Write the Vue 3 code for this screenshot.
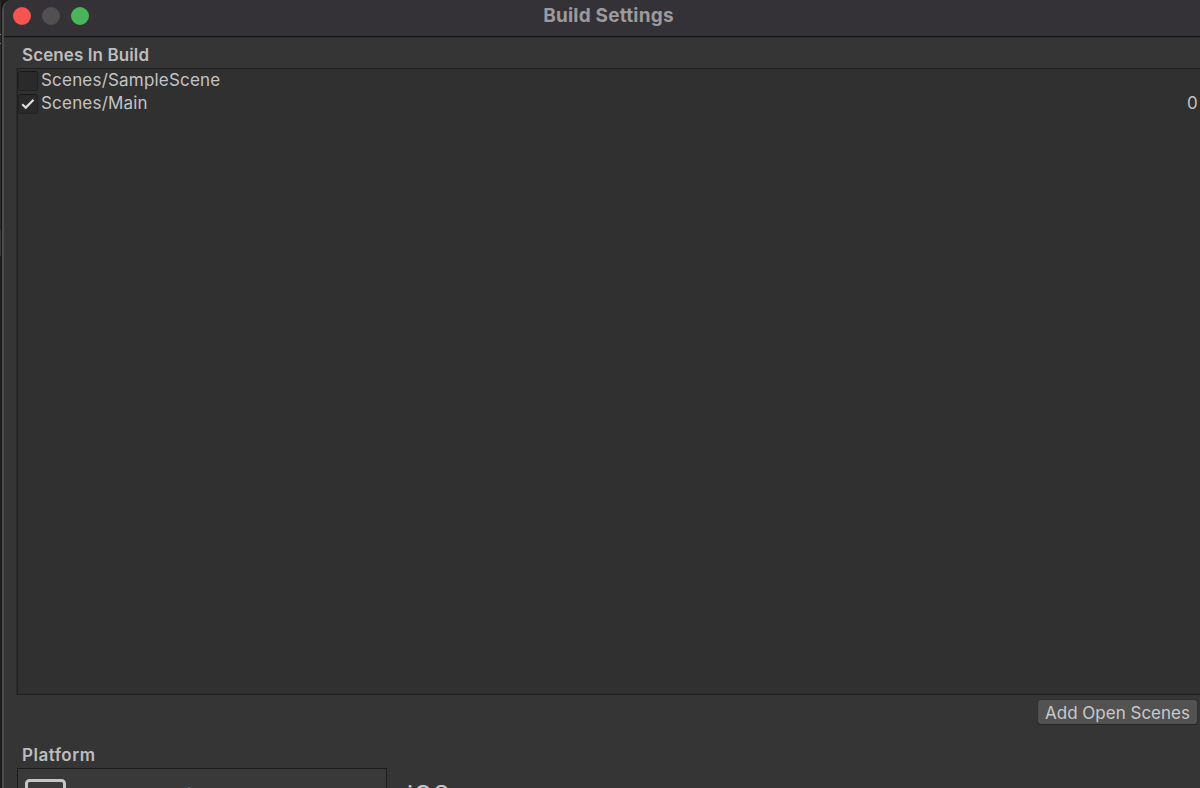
<template>
  <div class="desktop">
    <div class="edge">
      <i class="mark"></i>
    </div>
    <div class="window">
      <header class="titlebar">
        <div class="lights">
          <span class="light close"></span>
          <span class="light minimize"></span>
          <span class="light zoom"></span>
        </div>
        <h1>Build Settings</h1>
      </header>

      <main>
        <h2 class="scenes-title">Scenes In Build</h2>
        <div class="scene-list">
          <div v-for="scene in scenes" :key="scene.name" class="scene" @click="scene.enabled = !scene.enabled">
            <span class="checkbox">
              <svg v-if="scene.enabled" width="14" height="12" viewBox="0 0 14 12">
                <path d="M1.2 6.2 4.8 9.6 12.5 1.8" />
              </svg>
            </span>
            <span class="scene-name">{{ scene.name }}</span>
            <span v-if="scene.enabled" class="index">{{ buildIndex(scene) }}</span>
          </div>
        </div>

        <div class="actions">
          <button type="button">Add Open Scenes</button>
        </div>

        <h2 class="platform-title">Platform</h2>
        <div class="platforms">
          <div class="platform-list">
            <svg class="monitor" width="42" height="36" viewBox="0 0 42 36">
              <rect x="1.5" y="1.5" width="38" height="27" rx="3" />
            </svg>
            <span class="platform-name">PC, Mac &amp; Linux Standalone</span>
          </div>
          <div class="platform-detail">iOS</div>
        </div>
      </main>
    </div>
  </div>
</template>

<script setup>
import { ref } from 'vue';

const scenes = ref([
  { name: 'Scenes/SampleScene', enabled: false },
  { name: 'Scenes/Main', enabled: true }
]);

// Only enabled scenes get an index
const buildIndex = (scene) => scenes.value.filter((s) => s.enabled).indexOf(scene);
</script>

<style>
body {
  margin: 0;
  background: #1c1c1c;
  overflow: hidden;
}
</style>

<style scoped>
.desktop {
  display: flex;
  width: 1200px;
  height: 788px;
  overflow: hidden;
  background: #1b1b1b;
  color: #c4c4c4;
  font-family: Inter, "Liberation Sans", sans-serif;
}

.edge {
  width: 2px;
  flex: none;
  background: linear-gradient(90deg, transparent 50%, #1a1a1a 50%), linear-gradient(#292929 0 230px, #3a3a3a 230px 256px, #1c1c1c 256px);
}

.mark {
  display: block;
  width: 1px;
  height: 10px;
  margin-top: 34px;
  border-top: 1px solid #888;
  border-bottom: 1px solid #777;
  box-sizing: border-box;
}

.window {
  flex: 1;
  min-width: 0;
  box-sizing: border-box;
  border-left: 2px solid #4c4c4c;
  border-top-left-radius: 10px;
  background: #353535;
  overflow: hidden;
}

.titlebar {
  display: grid;
  grid-template-columns: 1fr auto 1fr;
  align-items: center;
  height: 37px;
  padding: 0 0 4px 9px;
  box-sizing: border-box;
  border-bottom: 1px solid #151515;
  background: #343236;
  box-shadow: 0 1px 0 #2a2a2a;
}

.lights {
  display: flex;
  gap: 11px;
}

.light {
  width: 18px;
  height: 18px;
  border-radius: 50%;
}

.close { background: #f6544f; }
.minimize { background: #505050; }
.zoom { background: #48b558; }

h1 {
  margin: 0 0 1px 4px;
  font-size: 19px;
  line-height: 22px;
  font-weight: 700;
  letter-spacing: 0.2px;
  color: #9b9a9c;
}

main {
  padding-left: 13px;
}

h2 {
  margin: 0;
  padding-left: 5px;
  font-size: 17px;
  line-height: 22px;
  font-weight: 600;
  color: #bdbdbd;
}

.scenes-title {
  padding-top: 7px;
  height: 24px;
  letter-spacing: 0.1px;
}

.scene-list {
  height: 627px;
  box-sizing: border-box;
  border: 1px solid #1f1f1f;
  border-width: 1px 0 1px 1px;
  background: #303030;
  box-shadow: -1px 0 0 #2b2b2b;
}

.scene {
  display: flex;
  align-items: center;
  height: 23px;
  padding-right: 2px;
  font-size: 17px;
  line-height: 22px;
  letter-spacing: 0.2px;
}

.scene-name,
.index {
  padding-bottom: 1px;
}

.checkbox {
  display: flex;
  align-items: center;
  justify-content: center;
  width: 20px;
  height: 20px;
  margin-right: 3px;
  box-sizing: border-box;
  border: 1px solid #222;
  border-top-color: #181818;
  border-radius: 3px;
  background: #2a2a2a;
}

.checkbox path {
  fill: none;
  stroke: #dedede;
  stroke-width: 2.2;
}

.index {
  margin-left: auto;
}

.actions {
  display: flex;
  justify-content: flex-end;
  padding: 5px 3px 0 0;
}

button {
  width: 159px;
  height: 24px;
  padding: 1px 0 0;
  border: none;
  border-radius: 3px;
  background: #525252;
  box-shadow: 0 1px 0 #242424, 0 0 0 1px #303030;
  color: #c9c9c9;
  font: 17px/24px Inter, "Liberation Sans", sans-serif;
}

.platform-title {
  padding-top: 20px;
  height: 24px;
  letter-spacing: 0.5px;
}

.platforms {
  display: flex;
}

.platform-list {
  display: flex;
  width: 370px;
  height: 60px;
  box-sizing: border-box;
  padding: 10px 0 0 7px;
  border: 1px solid #1c1c1c;
  background: #393939;
}

.monitor rect {
  fill: none;
  stroke: #c6c6c6;
  stroke-width: 3;
}

.platform-name {
  padding: 5px 0 0 18px;
  font-size: 17px;
  line-height: 22px;
  letter-spacing: 0.4px;
}

.platform-detail {
  padding: 13px 0 0 20px;
  font-size: 25px;
  line-height: 28px;
  letter-spacing: 0.5px;
}
</style>
